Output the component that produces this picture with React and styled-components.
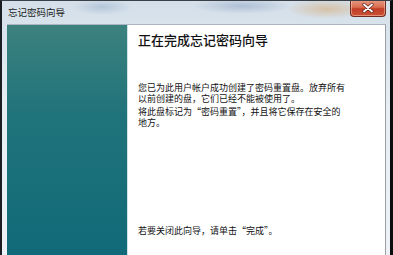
import React from "react";
import styled, { createGlobalStyle } from "styled-components";

const GlobalStyle = createGlobalStyle`
  html, body {
    margin: 0;
    padding: 0;
    background: #000;
  }
  body {
    font-family: "Noto Sans CJK SC", "Liberation Sans", sans-serif;
  }
`;

const Window = styled.div`
  width: 393px;
  height: 255px;
  box-sizing: border-box;
  display: flex;
  flex-direction: column;
  border-left: 2px solid #1a1d22;
  border-right: 3px solid #0b0c0e;
  border-top: 1px solid #3a4048;
  padding: 0 4px 0 5px;
  overflow: hidden;
  background:
    radial-gradient(ellipse 40px 10px at 325px 8px, rgba(214, 180, 140, 0.7), transparent),
    radial-gradient(ellipse 50px 8px at 240px 5px, rgba(150, 170, 200, 0.6), transparent),
    radial-gradient(ellipse 30px 8px at 100px 6px, rgba(120, 150, 190, 0.35), transparent),
    linear-gradient(180deg, #d4dfe9 0%, #e6edf3 40%, #eef2f6 100%);
`;

const TitleBar = styled.div`
  height: 23px;
  flex: none;
  display: flex;
  align-items: flex-start;
  justify-content: space-between;
`;

const Title = styled.span`
  margin: 5px 0 0 1px;
  font-size: 9.5px;
  line-height: 12px;
  color: #1c1c1c;
`;

const CloseButton = styled.div`
  width: 36px;
  height: 17px;
  margin: -1px 0 0 0;
  box-sizing: border-box;
  border: 1px solid #6e2b20;
  border-top: none;
  border-radius: 0 0 4px 4px;
  background: linear-gradient(180deg, #e89a82 0%, #d96e52 45%, #c13e26 55%, #cc5235 100%);
  box-shadow: inset 0 0 0 1px rgba(255, 210, 190, 0.5);
  display: flex;
  align-items: center;
  justify-content: center;
`;

const Body = styled.div`
  flex: 1;
  display: flex;
  border-top: 1px solid #aab6c2;
  border-right: 1px solid #9a9fa5;
  background: #fff;
`;

const Sidebar = styled.div`
  width: 120px;
  flex: none;
  background: linear-gradient(180deg, #3c817e 0%, #1f737a 40%, #116a79 100%);
  border-right: 1px solid #cfe2e6;
`;

const Content = styled.div`
  flex: 1;
  padding: 7px 0 0 10px;
  display: flex;
  flex-direction: column;
  color: #000;
`;

const Heading = styled.h1`
  margin: 0;
  font-size: 13px;
  line-height: 16px;
  font-weight: 500;
  color: #111;
`;

const Para = styled.p`
  margin: ${(p) => p.$top}px 0 0 0;
  font-size: 9px;
  line-height: 11px;
  white-space: nowrap;
  color: #111;
`;

function CloseIcon() {
  return (
    <svg width="12" height="10" viewBox="0 0 12 10">
      <path d="M2 1.5 L10 8.5 M10 1.5 L2 8.5" stroke="#5a2218" strokeWidth="3.2" strokeLinecap="round" />
      <path d="M2 1.5 L10 8.5 M10 1.5 L2 8.5" stroke="#fff" strokeWidth="1.8" strokeLinecap="round" />
    </svg>
  );
}

export default function App() {
  return (
    <>
      <GlobalStyle />
      <Window>
        <TitleBar>
          <Title>忘记密码向导</Title>
          <CloseButton>
            <CloseIcon />
          </CloseButton>
        </TitleBar>
        <Body>
          <Sidebar />
          <Content>
            <Heading>正在完成忘记密码向导</Heading>
            <Para $top={34}>
              您已为此用户帐户成功创建了密码重置盘。放弃所有
              <br />
              以前创建的盘，它们已经不能被使用了。
            </Para>
            <Para $top={2}>
              将此盘标记为“密码重置”，并且将它保存在安全的
              <br />
              地方。
            </Para>
            <Para $top={97}>若要关闭此向导，请单击“完成”。</Para>
          </Content>
        </Body>
      </Window>
    </>
  );
}
